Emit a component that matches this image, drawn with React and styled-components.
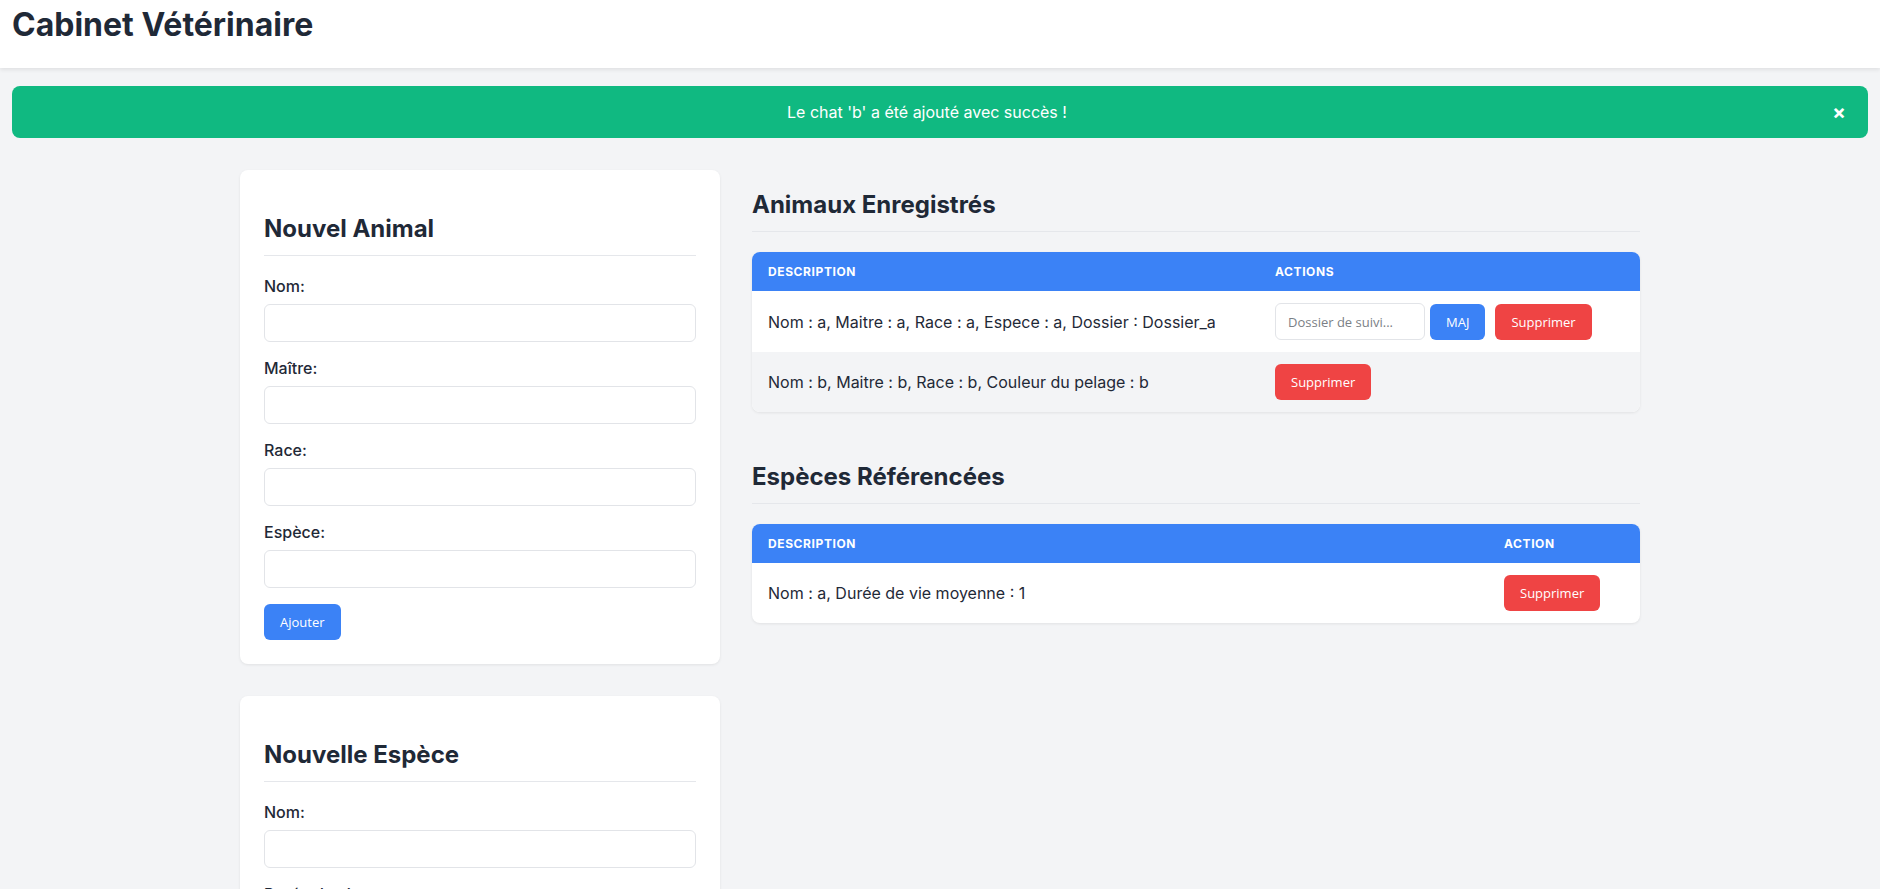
import styled, { createGlobalStyle } from "styled-components";

const GlobalStyle = createGlobalStyle`
  * {
    box-sizing: border-box;
  }
  body {
    margin: 0;
    background-color: #f3f4f6;
    font-family: Inter, "Liberation Sans", sans-serif;
    color: #1f2937;
  }
`

const Header = styled.header`
    height: 68px;
    padding: 5px 12px 0;
    background-color: #ffffff;
    box-shadow: 0 2px 4px rgba(0, 0, 0, 0.08);
`
const SiteTitle = styled.h1`
    margin: 0;
    font-size: 32px;
    font-weight: 700;
    line-height: normal;
`

const Alert = styled.div`
    display: flex;
    align-items: center;
    height: 52px;
    margin: 18px 12px 0;
    padding: 0 16px;
    border-radius: 8px;
    background-color: #10b981;
    color: #ffffff;
`
const AlertText = styled.p`
    flex: 1;
    margin: 0;
    text-align: center;
    font-size: 16px;
`
const CloseButton = styled.button`
    width: 26px;
    padding: 0;
    border: none;
    background: none;
    color: #ffffff;
    font-family: Inter, sans-serif;
    font-size: 20px;
    font-weight: 700;
    line-height: 1;
    cursor: pointer;
`

const Main = styled.main`
    display: grid;
    grid-template-columns: 480px 1fr;
    gap: 32px;
    align-items: start;
    max-width: 1400px;
    margin: 32px auto 0;
    padding-bottom: 40px;
`
const Column = styled.div`
    display: flex;
    flex-direction: column;
    gap: ${(p) => p.$gap}px;
`

const Card = styled.section`
    padding: 24px;
    border-radius: 8px;
    background-color: #ffffff;
    box-shadow: 0 1px 3px rgba(0, 0, 0, 0.08);
`
const SectionTitle = styled.h2`
    margin: 20px 0;
    padding-bottom: 12px;
    border-bottom: 1px solid #e5e7eb;
    font-size: 24px;
    font-weight: 700;
    line-height: normal;
    color: #1f2937;
`
const Field = styled.div`
    margin-bottom: 16px;
`
const Label = styled.label`
    display: block;
    margin-bottom: 8px;
    font-size: 16px;
    font-weight: 500;
    color: #1f2937;
`
const TextInput = styled.input`
    width: ${(p) => p.$width || "100%"};
    height: ${(p) => p.$height || 38}px;
    padding: 0 12px;
    border: 1px solid #e2e4e8;
    border-radius: 6px;
    background-color: #ffffff;
    font-family: "Open Sans", sans-serif;
    font-size: 13px;
    color: #1f2937;

    &::placeholder {
        color: #7b7f86;
    }
`
const Button = styled.button`
    height: 36px;
    padding: 0 16px;
    margin-left: ${(p) => p.$ml || 0}px;
    border: none;
    border-radius: 6px;
    background-color: ${(p) => (p.$danger ? "#ef4444" : "#3b82f6")};
    color: #ffffff;
    font-family: "Open Sans", sans-serif;
    font-size: 13px;
    cursor: pointer;
`

const TableBox = styled.div`
    overflow: hidden;
    border-radius: 8px;
    background-color: #ffffff;
    box-shadow: 0 1px 3px rgba(0, 0, 0, 0.08);
`
const Table = styled.table`
    width: 100%;
    border-collapse: collapse;
`
const Th = styled.th`
    width: ${(p) => p.$width || "auto"};
    padding: 12px 16px;
    background-color: #3b82f6;
    color: #ffffff;
    text-align: left;
    font-size: 12px;
    font-weight: 700;
    letter-spacing: 0.05em;
    text-transform: uppercase;
`
const Row = styled.tr`
    &:nth-child(even) {
        background-color: #f3f4f6;
    }
`
const Td = styled.td`
    padding: 12px 16px;
    font-size: 16px;
    color: #1f2937;
    vertical-align: middle;
`
const Actions = styled.div`
    display: flex;
    align-items: center;
`

const animals = [
    { id: 1, text: "Nom : a, Maitre : a, Race : a, Espece : a, Dossier : Dossier_a", dossier: true },
    { id: 2, text: "Nom : b, Maitre : b, Race : b, Couleur du pelage : b", dossier: false },
]

const species = [{ id: 1, text: "Nom : a, Durée de vie moyenne : 1" }]

const FormCard = ({ title, fields }) => (
    <Card>
        <SectionTitle>{title}</SectionTitle>
        {fields.map((f) => (
            <Field key={f}>
                <Label>{f}</Label>
                <TextInput type="text" />
            </Field>
        ))}
        <Button>Ajouter</Button>
    </Card>
)

const App = () => {
    return (
        <>
            <GlobalStyle />
            <Header>
                <SiteTitle>Cabinet Vétérinaire</SiteTitle>
            </Header>
            <Alert>
                <AlertText>Le chat 'b' a été ajouté avec succès !</AlertText>
                <CloseButton>×</CloseButton>
            </Alert>
            <Main>
                <Column $gap={32}>
                    <FormCard title="Nouvel Animal" fields={["Nom:", "Maître:", "Race:", "Espèce:"]} />
                    <FormCard title="Nouvelle Espèce" fields={["Nom:", "Durée de vie moyenne:"]} />
                </Column>
                <Column $gap={30}>
                    <div>
                        <SectionTitle>Animaux Enregistrés</SectionTitle>
                        <TableBox>
                            <Table>
                                <thead>
                                    <tr>
                                        <Th>Description</Th>
                                        <Th $width="381px">Actions</Th>
                                    </tr>
                                </thead>
                                <tbody>
                                    {animals.map((a) => (
                                        <Row key={a.id}>
                                            <Td>{a.text}</Td>
                                            <Td>
                                                <Actions>
                                                    {a.dossier && (
                                                        <>
                                                            <TextInput $width="150px" $height={37} placeholder="Dossier de suivi..." />
                                                            <Button $ml={5}>MAJ</Button>
                                                        </>
                                                    )}
                                                    <Button $danger $ml={a.dossier ? 10 : 0}>Supprimer</Button>
                                                </Actions>
                                            </Td>
                                        </Row>
                                    ))}
                                </tbody>
                            </Table>
                        </TableBox>
                    </div>
                    <div>
                        <SectionTitle>Espèces Référencées</SectionTitle>
                        <TableBox>
                            <Table>
                                <thead>
                                    <tr>
                                        <Th>Description</Th>
                                        <Th $width="152px">Action</Th>
                                    </tr>
                                </thead>
                                <tbody>
                                    {species.map((s) => (
                                        <Row key={s.id}>
                                            <Td>{s.text}</Td>
                                            <Td>
                                                <Button $danger>Supprimer</Button>
                                            </Td>
                                        </Row>
                                    ))}
                                </tbody>
                            </Table>
                        </TableBox>
                    </div>
                </Column>
            </Main>
        </>
    )
}

export default App;
